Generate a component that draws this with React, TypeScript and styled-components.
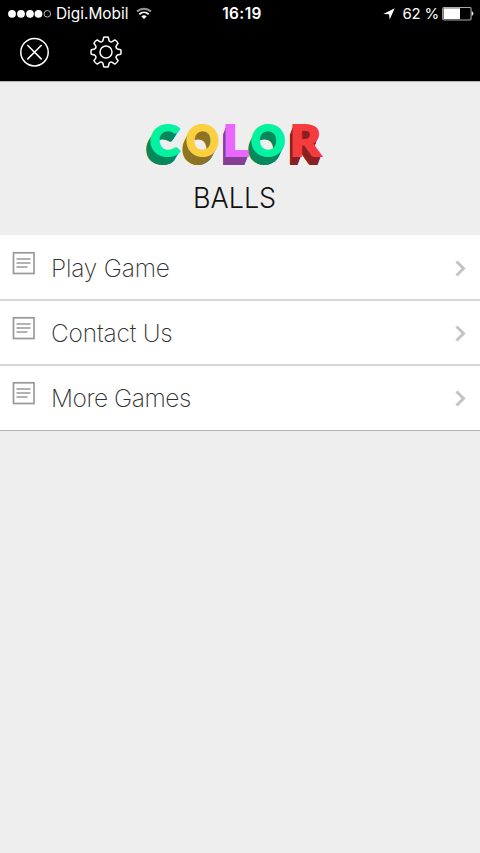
import React from 'react';
import styled, { createGlobalStyle } from 'styled-components';

const GlobalStyle = createGlobalStyle`
  * { box-sizing: border-box; }
  body { margin: 0; background: #eeeeee; font-family: Inter, "Liberation Sans", sans-serif; }
`;

const Screen = styled.div`
  width: 480px;
  height: 853px;
  display: flex;
  flex-direction: column;
  background: #eeeeee;
  overflow: hidden;
`;

const Header = styled.header`
  height: 82px;
  flex: none;
  background: #000;
  color: #fff;
  border-bottom: 1px solid #b4b4b4;
`;

const StatusBar = styled.div`
  height: 27px;
  display: grid;
  grid-template-columns: 190px 104px 1fr;
  align-items: center;
  font-size: 15px;
  line-height: 27px;
`;

const Carrier = styled.div`
  display: flex;
  align-items: center;
  padding-left: 8px;
  svg { display: block; }
`;

const CarrierName = styled.span`
  width: 72px;
  margin: 0 8px 0 5px;
  white-space: nowrap;
  font-size: 15.4px;
`;

const Clock = styled.time`
  text-align: center;
  font-weight: 600;
  font-size: 15.4px;
  letter-spacing: 0.4px;
`;

const Power = styled.div`
  display: flex;
  align-items: center;
  justify-content: flex-end;
  padding-right: 6px;
  svg { display: block; }
`;

const Percent = styled.span`
  margin: 0 3px 0 7px;
  white-space: nowrap;
  font-size: 15px;
  letter-spacing: -0.2px;
`;

const Toolbar = styled.nav`
  display: flex;
  gap: 39px;
  padding: 9px 0 0 19px;
`;

const IconButton = styled.button`
  width: 32px;
  height: 32px;
  padding: 0;
  border: 0;
  background: none;
  color: #fff;
  svg { display: block; }
`;

const Banner = styled.section`
  height: 153px;
  flex: none;
  padding: 32px 0 0 145px;
`;

const Logo = styled.div`
  display: flex;
  height: 52px;
  padding-left: 5px;
  font-family: Lato, sans-serif;
  font-weight: 900;
  font-size: 42px;
  line-height: 52px;
`;

const extrude = (dx: number, dy: number, color: string) =>
  Array.from({ length: dy * 2 }, (_, i) => {
    const t = (i + 1) / (dy * 2);
    return `${(dx * t).toFixed(2)}px ${(dy * t).toFixed(2)}px 0 ${color}`;
  }).join(', ');

interface LetterProps { $face: string; $side: string; $dx: number; $advance: number; $stretch: number }

const Letter = styled.span<LetterProps>`
  display: block;
  flex: none;
  width: ${p => p.$advance}px;
  color: ${p => p.$face};
  -webkit-text-stroke: 2px ${p => p.$face};
  text-shadow: ${p => extrude(p.$dx, 9, p.$side)};
  transform: scaleX(${p => p.$stretch});
  transform-origin: left;
`;

const Subtitle = styled.h1`
  margin: 15px 0 0 48px;
  width: 84px;
  font-weight: 300;
  font-size: 29px;
  line-height: 34px;
  color: #111;
  white-space: nowrap;
  transform: scaleX(0.93);
  transform-origin: left;
`;

const Menu = styled.ul`
  margin: 0;
  padding: 1px 0 0;
  background: #fff;
  list-style: none;
`;

const MenuItem = styled.li`
  height: 65px;
  display: flex;
  border-bottom: 2px solid #d6d6d6;
  &:last-child { border-bottom: 1px solid #b5b5b5; }
  svg { display: block; flex: none; }
`;

const NoteSlot = styled.span`
  width: 51px;
  padding: 15px 0 0 12px;
`;

const Label = styled.span<{ $spacing: number }>`
  flex: 1;
  font-size: 24.5px;
  font-weight: 250;
  line-height: 64px;
  color: #303030;
  letter-spacing: ${p => p.$spacing}px;
`;

const ArrowSlot = styled.span`
  padding: 24px 13px 0 0;
`;

const letters = [
  { ch: 'C', face: '#05f2a0', side: '#07885c', dx: -5, advance: 36, stretch: 1.07 },
  { ch: 'O', face: '#fbd040', side: '#8d7324', dx: -5, advance: 37, stretch: 0.97 },
  { ch: 'L', face: '#e868fb', side: '#854096', dx: -3, advance: 28, stretch: 1.16 },
  { ch: 'O', face: '#05f2a0', side: '#07885c', dx: -4, advance: 39, stretch: 1 },
  { ch: 'R', face: '#f63b3d', side: '#8b2022', dx: -3, advance: 34, stretch: 1.13 },
];

const items = [
  { label: 'Play Game', spacing: -0.2 },
  { label: 'Contact Us', spacing: -0.2 },
  { label: 'More Games', spacing: -0.45 },
];

const gearPath = Array.from({ length: 8 }, (_, i) => {
  const point = (r: number, deg: number) => {
    const a = ((deg + i * 45 - 90) * Math.PI) / 180;
    return `${(16 + r * Math.cos(a)).toFixed(2)} ${(16 + r * Math.sin(a)).toFixed(2)}`;
  };
  return `${i ? 'L' : 'M'}${point(11.7, -15)} L${point(14.9, -9)} Q${point(15.4, 0)} ${point(14.9, 9)} L${point(11.7, 15)} Q${point(10.5, 22.5)} ${point(11.7, 30)}`;
}).join(' ') + 'Z';

const Signal = () => (
  <svg width="43" height="10" viewBox="0 0 43 10" fill="#fff">
    {[4, 13, 22, 30.5].map(x => <circle key={x} cx={x} cy="4.8" r="3.9" />)}
    <circle cx="39.3" cy="4.8" r="3.3" fill="none" stroke="#bbb" strokeWidth="1" />
  </svg>
);

const Wifi = () => (
  <svg width="16" height="13" viewBox="0 0 16 13" fill="none" strokeWidth="1.9">
    <path d="M1 4.5C5 .8 11 .8 15 4.5" stroke="#999" />
    <path d="M3.3 7.2C6 4.8 10 4.8 12.7 7.2" stroke="#fff" />
    <path d="M5.3 9.4Q8 7.2 10.7 9.4L8 12Z" fill="#fff" />
  </svg>
);

const Location = () => (
  <svg width="12" height="12" viewBox="0 0 12 12" fill="#fff">
    <path d="M11.7.3 6.7 11.6 6 6.3.2 5.9Z" />
  </svg>
);

const Battery = () => (
  <svg width="32" height="14" viewBox="0 0 32 14">
    <rect x=".7" y=".4" width="28.4" height="12.6" rx="1.5" fill="none" stroke="#aaa" strokeWidth="1.1" />
    <rect x="1.6" y="1.3" width="16.4" height="10.8" fill="#fff" />
    <path d="M29.8 4Q33 6.6 29.8 9.2Z" fill="#eee" />
  </svg>
);

const Note = () => (
  <svg width="24" height="24" viewBox="0 0 24 24" fill="none" stroke="#999">
    <rect x="1.5" y="1.8" width="20.5" height="20.7" strokeWidth="1.7" />
    <path d="M4.5 8h14M4.5 12h14M4.5 16h11" strokeWidth="1.7" />
  </svg>
);

const Chevron = () => (
  <svg width="12" height="17" viewBox="0 0 12 17" fill="none" stroke="#c4c4c4" strokeWidth="3">
    <path d="m1.5 1.5 7 7-7 7" />
  </svg>
);

export default function App() {
  return (
    <Screen>
      <GlobalStyle />
      <Header>
        <StatusBar>
          <Carrier><Signal /><CarrierName>Digi.Mobil</CarrierName><Wifi /></Carrier>
          <Clock>16:19</Clock>
          <Power><Location /><Percent>62 %</Percent><Battery /></Power>
        </StatusBar>
        <Toolbar>
          <IconButton aria-label="Close">
            <svg width="32" height="32" viewBox="0 0 32 32" fill="none" stroke="#fff" strokeWidth="1.5">
              <circle cx="15.5" cy="16.2" r="13.7" />
              <path d="m8.3 9 14.4 14.4M22.7 9 8.3 23.4" />
            </svg>
          </IconButton>
          <IconButton aria-label="Settings">
            <svg width="32" height="32" viewBox="0 0 32 32" fill="none" stroke="#fff" strokeWidth="1.5" strokeLinejoin="round">
              <path d={gearPath} />
              <circle cx="16" cy="16" r="6" />
            </svg>
          </IconButton>
        </Toolbar>
      </Header>
      <Banner>
        <Logo>
          {letters.map((l, i) => (
            <Letter key={i} $face={l.face} $side={l.side} $dx={l.dx} $advance={l.advance} $stretch={l.stretch}>{l.ch}</Letter>
          ))}
        </Logo>
        <Subtitle>BALLS</Subtitle>
      </Banner>
      <Menu>
        {items.map(item => (
          <MenuItem key={item.label}>
            <NoteSlot><Note /></NoteSlot>
            <Label $spacing={item.spacing}>{item.label}</Label>
            <ArrowSlot><Chevron /></ArrowSlot>
          </MenuItem>
        ))}
      </Menu>
    </Screen>
  );
}
